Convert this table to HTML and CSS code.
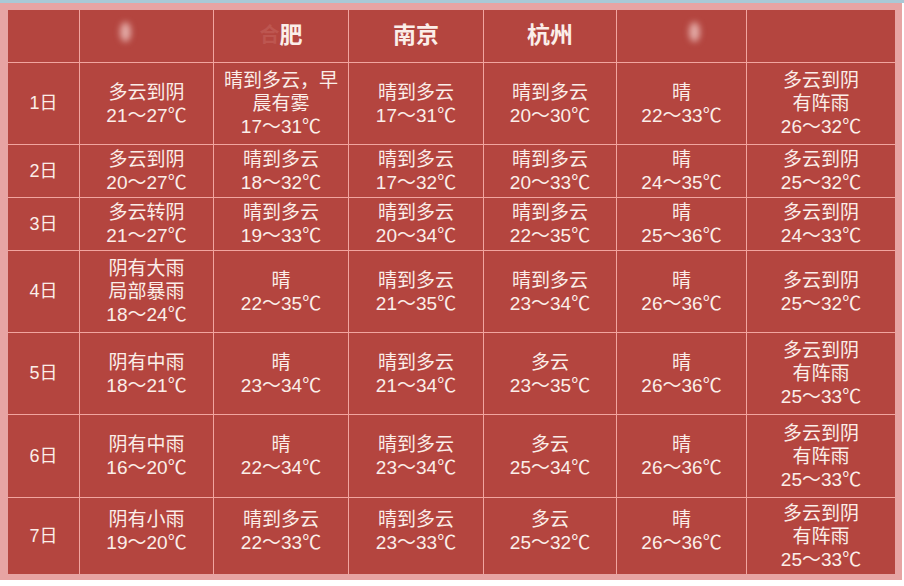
FILE: index.html
```html
<!DOCTYPE html>
<html lang="zh">
<head>
<meta charset="utf-8">
<title>天气预报</title>
<link rel="stylesheet" href="styles.css">
</head>
<body>
<div class="topstrip"></div>
<div class="frame">
  <div class="table">
    <div class="cell head"></div>
    <div class="cell head"><span class="blob b1"></span></div>
    <div class="cell head"><span class="faint">合</span>肥</div>
    <div class="cell head">南京</div>
    <div class="cell head">杭州</div>
    <div class="cell head"><span class="blob b2"></span></div>
    <div class="cell head"></div>

    <div class="cell day">1日</div>
    <div class="cell">多云到阴<br>21～27℃</div>
    <div class="cell">晴到多云，早<br>晨有雾<br>17～31℃</div>
    <div class="cell">晴到多云<br>17～31℃</div>
    <div class="cell">晴到多云<br>20～30℃</div>
    <div class="cell">晴<br>22～33℃</div>
    <div class="cell">多云到阴<br>有阵雨<br>26～32℃</div>

    <div class="cell day">2日</div>
    <div class="cell">多云到阴<br>20～27℃</div>
    <div class="cell">晴到多云<br>18～32℃</div>
    <div class="cell">晴到多云<br>17～32℃</div>
    <div class="cell">晴到多云<br>20～33℃</div>
    <div class="cell">晴<br>24～35℃</div>
    <div class="cell">多云到阴<br>25～32℃</div>

    <div class="cell day">3日</div>
    <div class="cell">多云转阴<br>21～27℃</div>
    <div class="cell">晴到多云<br>19～33℃</div>
    <div class="cell">晴到多云<br>20～34℃</div>
    <div class="cell">晴到多云<br>22～35℃</div>
    <div class="cell">晴<br>25～36℃</div>
    <div class="cell">多云到阴<br>24～33℃</div>

    <div class="cell day">4日</div>
    <div class="cell">阴有大雨<br>局部暴雨<br>18～24℃</div>
    <div class="cell">晴<br>22～35℃</div>
    <div class="cell">晴到多云<br>21～35℃</div>
    <div class="cell">晴到多云<br>23～34℃</div>
    <div class="cell">晴<br>26～36℃</div>
    <div class="cell">多云到阴<br>25～32℃</div>

    <div class="cell day">5日</div>
    <div class="cell">阴有中雨<br>18～21℃</div>
    <div class="cell">晴<br>23～34℃</div>
    <div class="cell">晴到多云<br>21～34℃</div>
    <div class="cell">多云<br>23～35℃</div>
    <div class="cell">晴<br>26～36℃</div>
    <div class="cell">多云到阴<br>有阵雨<br>25～33℃</div>

    <div class="cell day">6日</div>
    <div class="cell">阴有中雨<br>16～20℃</div>
    <div class="cell">晴<br>22～34℃</div>
    <div class="cell">晴到多云<br>23～34℃</div>
    <div class="cell">多云<br>25～34℃</div>
    <div class="cell">晴<br>26～36℃</div>
    <div class="cell">多云到阴<br>有阵雨<br>25～33℃</div>

    <div class="cell day">7日</div>
    <div class="cell up">阴有小雨<br>19～20℃</div>
    <div class="cell up">晴到多云<br>22～33℃</div>
    <div class="cell up">晴到多云<br>23～33℃</div>
    <div class="cell up">多云<br>25～32℃</div>
    <div class="cell up">晴<br>26～36℃</div>
    <div class="cell">多云到阴<br>有阵雨<br>25～33℃</div>
  </div>
</div>
</body>
</html>
```

FILE: styles.css
```css
html, body {
  margin: 0;
  padding: 0;
}
body {
  width: 904px;
  height: 586px;
  background: #ffffff;
  overflow: hidden;
  font-family: "Liberation Sans", "Noto Sans CJK SC", sans-serif;
}
.topstrip {
  height: 3px;
  background: #a9c9d6;
}
.frame {
  background: #e7a4a3;
  padding: 7px 7px 6px 8px;
  width: 887px;
}
.table {
  display: grid;
  grid-template-columns: 71px 133px 134px 134px 132px 129px 148px;
  grid-template-rows: 52px 81px 52px 52px 81px 81px 82px 76px;
  gap: 1px;
  background: #f1a59f;
}
.cell {
  background: #b4453f;
  color: #fbeee9;
  font-size: 19px;
  line-height: 23px;
  display: flex;
  align-items: center;
  justify-content: center;
  text-align: center;
  position: relative;
}
.cell.up {
  padding-bottom: 10px;
}
.head {
  font-size: 23px;
  font-weight: bold;
  padding-bottom: 2px;
}
.day {
  font-size: 18px;
}
.faint {
  color: #bd5650;
  font-size: 20px;
}
.blob {
  position: absolute;
  width: 11px;
  height: 20px;
  border-radius: 50%;
  background: #e3aaa6;
  filter: blur(3px);
}
.b1 { left: 40px; top: 12px; }
.b2 { left: 72px; top: 12px; }
```
